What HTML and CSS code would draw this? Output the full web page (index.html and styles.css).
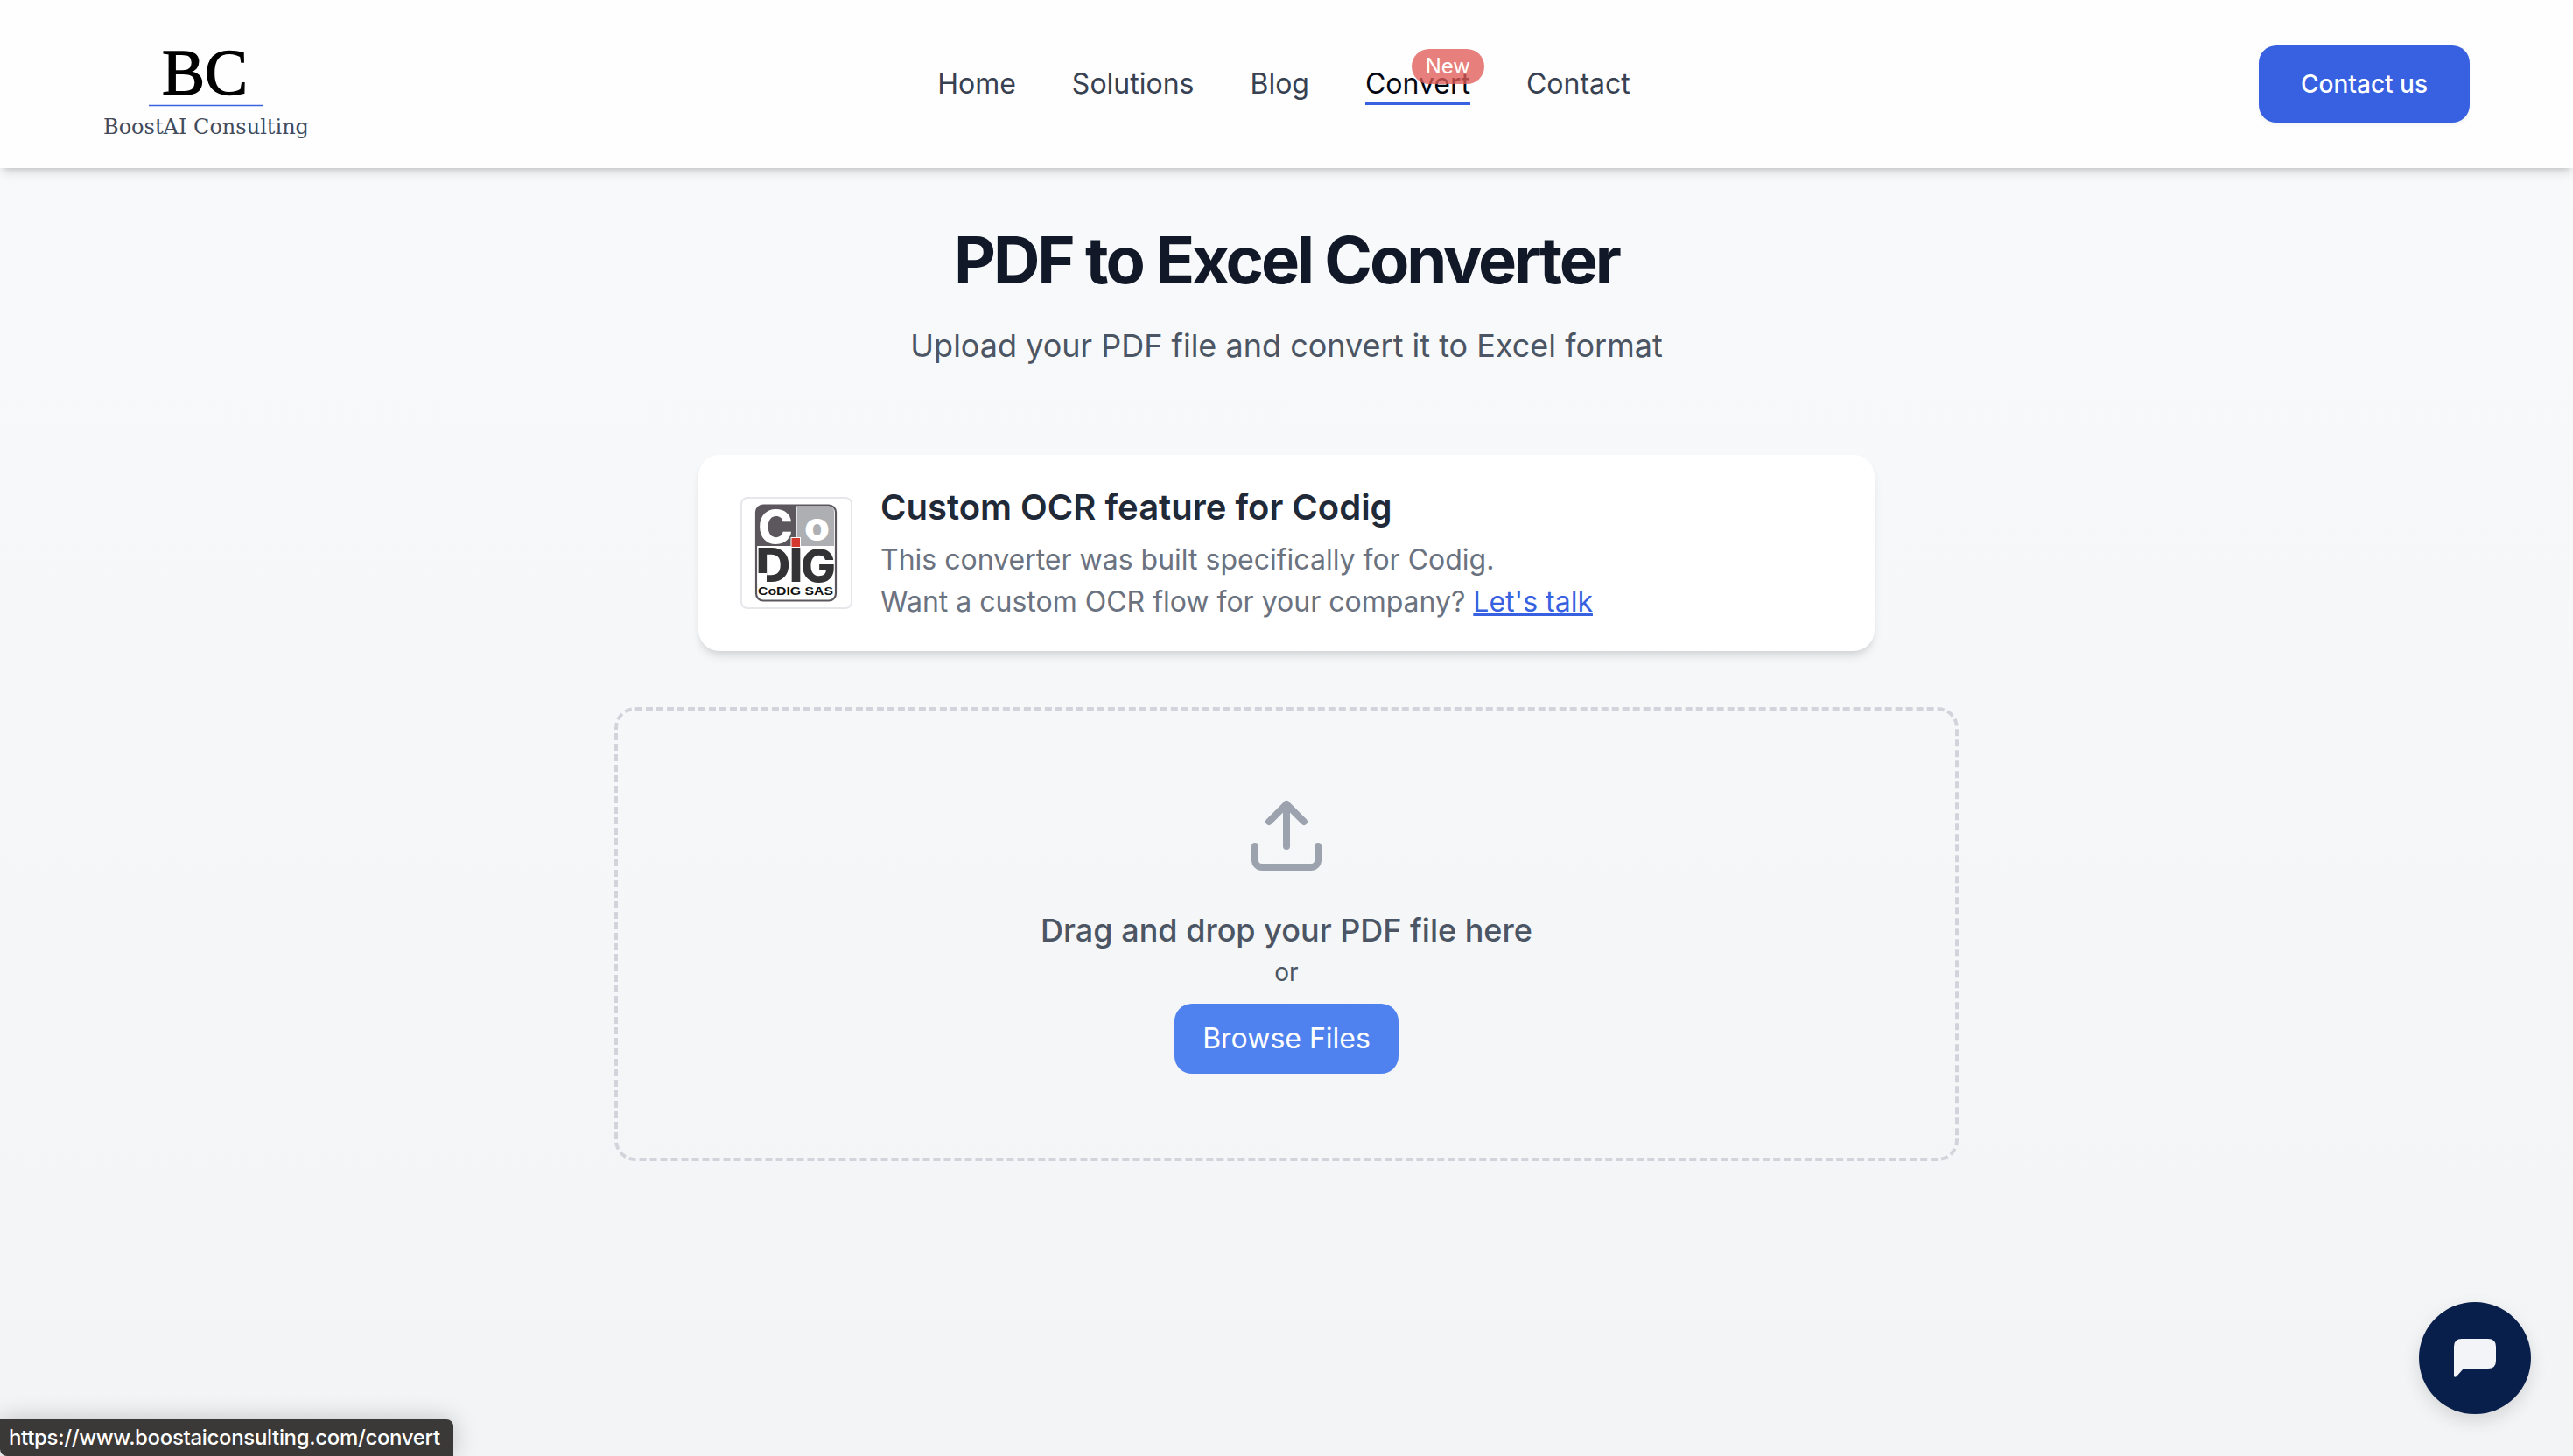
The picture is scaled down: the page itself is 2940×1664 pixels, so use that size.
FILE: index.html
```html
<!DOCTYPE html>
<html lang="en">
<head>
<meta charset="utf-8">
<title>PDF to Excel Converter</title>
<link rel="stylesheet" href="styles.css">
</head>
<body>
<header class="header">
  <a class="brand">
    <svg width="240" height="130" viewBox="0 0 240 130">
      <text class="brand-initials" x="67" y="72" textLength="98" lengthAdjust="spacingAndGlyphs">BC</text>
      <path d="M52 84.5H182" stroke="#3b62e0" stroke-width="1.6"/>
      <text class="brand-name" x="0" y="117" textLength="235" lengthAdjust="spacingAndGlyphs">BoostAI Consulting</text>
    </svg>
  </a>
  <nav class="nav">
    <a>Home</a>
    <a>Solutions</a>
    <a>Blog</a>
    <a class="active">Convert<span class="badge">New</span></a>
    <a>Contact</a>
  </nav>
  <a class="contact">Contact us</a>
</header>
<main class="main">
  <h1 class="title">PDF to Excel Converter</h1>
  <p class="subtitle">Upload your PDF file and convert it to Excel format</p>
  <section class="card">
    <div class="logo-box">
      <svg width="94" height="112" viewBox="0 0 94 112">
        <rect x="1" y="1.5" width="91" height="109" rx="8" fill="#fff"/>
        <path d="M9 1.500H47V48H1V9.500Q1 1.500 9 1.500Z" fill="#5b575d"/>
        <path d="M47 3H84Q90 3 90 9V48H47Z" fill="#adafb3"/>
        <path d="M47 3V48" stroke="#fff" stroke-width="1.300"/>
        <rect x="3" y="48" width="87" height="2.500" fill="#fff"/>
        <rect x="1" y="1.500" width="91" height="109" rx="8" fill="none" stroke="#5b575d" stroke-width="2.200"/>
        <text class="mark" x="3" y="45" font-size="52" fill="#fff" textLength="40" lengthAdjust="spacingAndGlyphs">C</text>
        <text class="mark" x="56" y="41.500" font-size="46" fill="#fff" textLength="29" lengthAdjust="spacingAndGlyphs">o</text>
        <text class="mark" x="0.500" y="89" font-size="53" fill="#333335" textLength="40" lengthAdjust="spacingAndGlyphs">D</text>
        <text class="mark" x="38.500" y="89" font-size="53" fill="#333335" textLength="16" lengthAdjust="spacingAndGlyphs">I</text>
        <text class="mark" x="52" y="88.500" font-size="51.500" fill="#333335" textLength="40" lengthAdjust="spacingAndGlyphs">G</text>
        <path d="M2.500 79H13V90H2.500Z" fill="#fff"/>
        <rect x="41" y="38.500" width="10.500" height="11" fill="#d5382f" stroke="#fff"/>
        <text class="mark-name" x="3" y="104" textLength="86" lengthAdjust="spacingAndGlyphs">CoDIG SAS</text>
      </svg>
    </div>
    <div class="card-text">
      <h2>Custom OCR feature for Codig</h2>
      <p>This converter was built specifically for Codig.<br>Want a custom OCR flow for your company? <a>Let's talk</a></p>
    </div>
  </section>
  <section class="dropzone">
    <svg width="96" height="96" viewBox="0 0 24 24" fill="none" stroke="#9ca3af" stroke-width="2" stroke-linecap="round" stroke-linejoin="round">
      <path d="M21 15v4a2 2 0 0 1-2 2H5a2 2 0 0 1-2-2v-4M17 8l-5-5-5 5M12 3v12"/>
    </svg>
    <p class="drop-label">Drag and drop your PDF file here</p>
    <p class="or">or</p>
    <button class="browse">Browse Files</button>
  </section>
</main>
<button class="chat" aria-label="Open chat">
  <svg width="48" height="44" viewBox="0 0 48 44"><path d="M9 0H39Q48 0 48 9V25Q48 34 39 34H11L3 43Q0 45 0 42V9Q0 0 9 0Z" fill="#f3f4f8"/></svg>
</button>
<div class="status">https://www.boostaiconsulting.com/convert</div>
</body>
</html>
```
FILE: styles.css
```css
* { box-sizing: border-box; }
body {
  margin: 0;
  height: 1664px;
  overflow: hidden;
  position: relative;
  font-family: Inter, "Liberation Sans", sans-serif;
  color: #374151;
  background: linear-gradient(#f9fafb, #f3f4f6);
}
h1, h2, p { margin: 0; }
button { border: 0; font: inherit; }
svg { overflow: visible; }

.header {
  position: relative;
  height: 192px;
  padding: 0 118px;
  display: grid;
  grid-template-columns: 1fr auto 1fr;
  align-items: center;
  background: #fefefe;
  box-shadow: 0 8px 12px -2px rgba(0, 0, 0, 0.1), 0 4px 8px -4px rgba(0, 0, 0, 0.2);
}
.brand { display: flex; height: 120px; }
.brand-initials { font: 74px "Liberation Serif", serif; stroke: #000; stroke-width: 1.4; }
.brand-name { font: 25px "DejaVu Serif", serif; fill: #414b5c; }
.nav { display: flex; gap: 64px; margin-right: 6px; font-size: 32px; line-height: 48px; color: #374151; }
.nav a { position: relative; }
.nav .active { color: #030712; }
.active::after {
  content: "";
  position: absolute;
  left: 0;
  right: 0;
  bottom: 0;
  height: 4px;
  background: #3761e0;
}
.badge {
  position: absolute;
  top: -16px;
  right: -16px;
  padding: 0 16px;
  border-radius: 20px;
  font-size: 24px;
  line-height: 40px;
  color: #fff;
  background: rgba(224, 92, 88, 0.78);
}
.contact {
  justify-self: end;
  padding: 0 48px;
  border-radius: 20px;
  font-size: 28px;
  font-weight: 500;
  line-height: 88px;
  color: #fff;
  background: #3761e0;
  box-shadow: 0 2px 4px rgba(0, 0, 0, 0.05);
}

.main { display: flex; flex-direction: column; align-items: center; padding-top: 57px; }
.title { font-size: 74px; line-height: 96px; font-weight: 700; letter-spacing: -0.0415em; color: #111827; }
.subtitle { margin-top: 22px; font-size: 36px; line-height: 56px; color: #4b5563; }
.card {
  width: 1344px;
  height: 224px;
  margin-top: 97px;
  padding: 0 48px;
  display: flex;
  align-items: center;
  gap: 32px;
  border-radius: 24px;
  background: #fff;
  box-shadow: 0 8px 12px -2px rgba(0, 0, 0, 0.1), 0 4px 8px -4px rgba(0, 0, 0, 0.1);
}
.logo-box {
  width: 128px;
  height: 128px;
  display: flex;
  align-items: center;
  justify-content: center;
  border: 2px solid #e5e7eb;
  border-radius: 8px;
}
.mark { font-family: Inter, sans-serif; font-weight: 800; }
.mark-name { font: 700 13px "Liberation Sans", sans-serif; fill: #111; }
.card-text h2 { font-size: 40px; line-height: 56px; font-weight: 600; color: #1f2937; }
.card-text p { margin-top: 8px; font-size: 32px; line-height: 48px; color: #6b7280; }
.card-text a { color: #3761e0; text-decoration: underline; }

.dropzone {
  width: 1536px;
  height: 519px;
  margin-top: 64px;
  padding-top: 95px;
  display: flex;
  flex-direction: column;
  align-items: center;
  border: 4px dashed #d1d5db;
  border-radius: 24px;
}
.drop-label { margin-top: 32px; font-size: 36px; line-height: 56px; font-weight: 500; color: #4b5563; }
.or { font-size: 28px; line-height: 40px; color: #4b5563; }
.browse {
  margin-top: 16px;
  padding: 0 32px;
  border-radius: 20px;
  font-size: 32px;
  line-height: 80px;
  color: #fff;
  background: #4f82ee;
}

.chat {
  position: absolute;
  right: 48px;
  bottom: 48px;
  width: 128px;
  height: 128px;
  padding: 0;
  display: flex;
  align-items: center;
  justify-content: center;
  border-radius: 50%;
  background: #081e4b;
  box-shadow: 0 8px 20px rgba(0, 0, 0, 0.12);
}
.status {
  position: absolute;
  left: 0;
  bottom: 0;
  width: 518px;
  height: 42px;
  padding-left: 10px;
  border-radius: 0 8px 0 8px;
  font-size: 24px;
  font-weight: 500;
  line-height: 42px;
  letter-spacing: -0.0138em;
  white-space: nowrap;
  color: #fff;
  background: #3b3937;
  box-shadow: 0 0 28px rgba(0, 0, 0, 0.22);
}
```
